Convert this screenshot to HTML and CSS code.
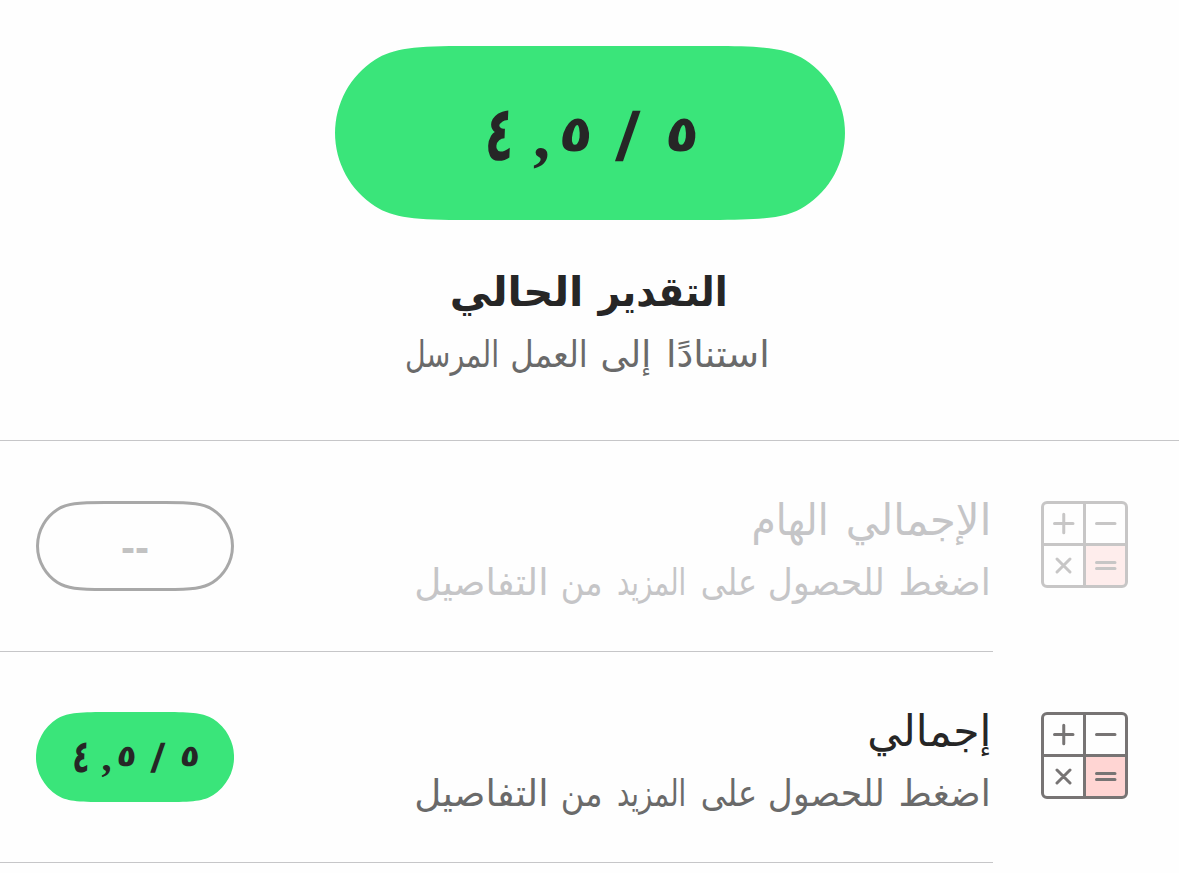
FILE: index.html
```html
<!DOCTYPE html>
<html lang="ar" dir="rtl">
<head>
<meta charset="utf-8">
<title>التقدير الحالي</title>
<link rel="stylesheet" href="styles.css">
</head>
<body>
<svg class="defs" aria-hidden="true">
  <symbol id="calculator" viewBox="0 0 87 87">
    <path class="equals-cell" d="M43.5 43.5H85.5V81a4.5 4.5 0 0 1-4.5 4.5H43.5Z"/>
    <g class="strokes">
      <rect x="1.5" y="1.5" width="84" height="84" rx="4.5"/>
      <path d="M43.5 1.5V85.5M1.5 43.5H85.5"/>
      <path class="sign" d="M13.5 22.5H32M22.75 13.2V31.8M55.5 22.5H74M16 58L29 71M29 58L16 71M55.5 61.5H74M55.5 67.5H74"/>
    </g>
  </symbol>
</svg>

<header class="summary">
  <div class="pill pill-large">
    <svg class="pill-shape" viewBox="0 0 510 174" aria-hidden="true"><path d="M133 0C80 0 58 2.2 40 13.8A87 87 0 0 0 40 160.2C58 171.8 80 174 133 174H377C430 174 452 171.8 470 160.2A87 87 0 0 0 470 13.8C452 2.2 430 0 377 0Z"/></svg>
    <div class="score" dir="ltr"><span class="four">٤</span><span class="comma">,</span><span class="five first">٥</span><span class="slash">/</span><span class="five">٥</span></div>
  </div>
  <h1><span class="line"><span class="t1">التقدير</span> <span class="t2">الحالي</span></span></h1>
  <p class="basis"><span class="line"><span class="b1">استنادًا</span> <span class="b2">إلى</span> <span class="b3">العمل</span> <span class="b4">المرسل</span></span></p>
</header>

<main>
  <section class="row muted">
    <svg class="icon"><use href="#calculator"/></svg>
    <div class="body">
      <div class="labels">
        <h2><span class="line"><span>الإجمالي</span> <span class="h2nd">الهام</span></span></h2>
        <p><span class="line"><span class="d1">اضغط</span> <span class="d2">للحصول</span> <span class="d3">على</span> <span class="d4">المزيد</span> <span class="d5">من</span> <span class="d6">التفاصيل</span></span></p>
      </div>
      <div class="pill pill-small outlined">
        <svg class="pill-shape" viewBox="0 0 198 90" aria-hidden="true"><path d="M68.8 1.5C42 1.5 30.5 2.6 21.5 8.4A43.5 43.5 0 0 0 21.5 81.6C30.5 87.4 42 88.5 68.8 88.5H129.2C156 88.5 167.5 87.4 176.5 81.6A43.5 43.5 0 0 0 176.5 8.4C167.5 2.6 156 1.5 129.2 1.5Z"/></svg>
        <span class="empty" dir="ltr">--</span>
      </div>
    </div>
  </section>
  <section class="row">
    <svg class="icon"><use href="#calculator"/></svg>
    <div class="body">
      <div class="labels">
        <h2><span class="line short">إجمالي</span></h2>
        <p><span class="line"><span class="d1">اضغط</span> <span class="d2">للحصول</span> <span class="d3">على</span> <span class="d4">المزيد</span> <span class="d5">من</span> <span class="d6">التفاصيل</span></span></p>
      </div>
      <div class="pill pill-small">
        <svg class="pill-shape" viewBox="0 0 198 90" aria-hidden="true"><path d="M68.8 0C41.4 0 30 1.1 20.7 7.1A45 45 0 0 0 20.7 82.9C30 88.9 41.4 90 68.8 90H129.2C156.6 90 168 88.9 177.3 82.9A45 45 0 0 0 177.3 7.1C168 1.1 156.6 0 129.2 0Z"/></svg>
        <div class="score" dir="ltr"><span class="four">٤</span><span class="comma">,</span><span class="five first">٥</span><span class="slash">/</span><span class="five">٥</span></div>
      </div>
    </div>
  </section>
</main>
</body>
</html>
```
FILE: styles.css
```css
* { box-sizing: border-box; }
html, body { margin: 0; }
body {
  height: 873px;
  overflow: hidden;
  background: #fefefe;
  color: #262626;
  font-family: "DejaVu Sans", sans-serif;
}
h1, h2, p { margin: 0; white-space: nowrap; }
h1 span, h2 span, p span { display: inline-block; transform-origin: right; }
.defs { display: none; }

.summary {
  display: flex;
  flex-direction: column;
  align-items: center;
  height: 441px;
  padding-top: 46px;
  border-bottom: 1px solid #c6c6c8;
}
.summary .line { transform-origin: center; }
.summary h1 { margin-top: 42px; font-size: 41px; line-height: 60px; }
.summary h1 .line { transform: translateX(-2px) scaleX(.975); }
.basis { margin-top: 3px; font-size: 37px; line-height: 60px; color: #6a6a6a; }
.basis .line { transform: translateX(-2px) scaleX(.91); }

/* Per-word width and position within each line */
.t1 { transform: scaleX(.945); }
.t2 { transform: translateX(7px) scaleX(1.045); }
.b1 { transform: scaleX(1.12); }
.b2 { transform: translateX(-17px) scaleX(1.06); }
.b3 { transform: translateX(-22px) scaleX(.96); }
.b4 { transform: translateX(-19px) scaleX(.845); }
.h2nd { transform: translateX(-4px) scaleX(.94); }
.d1 { transform: scaleX(1.045); }
.d2 { transform: translateX(-7px); }
.d3 { transform: translateX(-7px) scaleX(.93); }
.d4 { transform: translateX(-6px) scaleX(.8); }
.d5 { transform: translateX(9px) scaleX(.93); }
.d6 { transform: translateX(11px) scaleX(1.08); }

.pill { display: grid; flex: none; place-items: center; }
.pill > * { grid-area: 1 / 1; }
.pill-large { width: 510px; height: 174px; font-size: 68px; }
.pill-small { width: 198px; height: 90px; font-size: 40.3px; }
.pill-shape { display: block; width: 100%; height: 100%; fill: #3ae57a; }
.outlined .pill-shape { fill: none; stroke: #a8a8a8; stroke-width: 3; }

.score {
  display: grid;
  grid-template-columns: .588em .647em .441em 1.059em .5em;
  align-items: baseline;
  justify-items: center;
  width: 3.235em;
  line-height: 1;
  font-weight: bold;
}
.score span { display: block; }
.four { transform: translateY(0) scale(.7, 1.13) skewX(-4deg); }
.five { font-size: .76em; transform: translate(-.01em, -.11em) scale(1.06, .98) skewX(-6deg); }
.five.first { transform: translate(-.05em, -.11em) scale(1.06, .98) skewX(-6deg); }
.comma { font-family: "Liberation Serif", serif; transform: translateY(.02em); }
.slash { font-family: "Liberation Sans", sans-serif; transform: translate(-.025em, .04em) skewX(-9deg); }
.empty {
  color: #c2c2c2;
  font: bold 42px/1 "Liberation Sans", sans-serif;
  transform: translateY(2px);
}

.row { display: flex; height: 211px; padding-right: 51px; }
.icon { flex: none; width: 87px; height: 87px; margin: 60px 0 0 48px; }
.strokes { fill: none; stroke: #777474; stroke-width: 3; }
.sign { stroke-linecap: round; }
.equals-cell { fill: #ffd5d3; }
.body {
  display: flex;
  flex: 1;
  justify-content: space-between;
  padding: 60px 0 0 36px;
  border-bottom: 1px solid #c6c6c8;
}
.labels h2 { height: 60px; margin-top: -11px; font-size: 43px; font-weight: normal; line-height: 60px; }
.labels h2 .line { transform: translateX(-2px) scaleX(.97); }
.labels h2 .short { transform: translateX(-2px) scaleX(.99); }
.labels p { margin-top: 3px; font-size: 37px; line-height: 60px; color: #6a6a6a; }
.labels p .line { transform: translateX(-2px) scaleX(.932); }
.muted .labels, .muted .labels p { color: #c5c5c7; }
.muted .icon { opacity: .4; }
```
